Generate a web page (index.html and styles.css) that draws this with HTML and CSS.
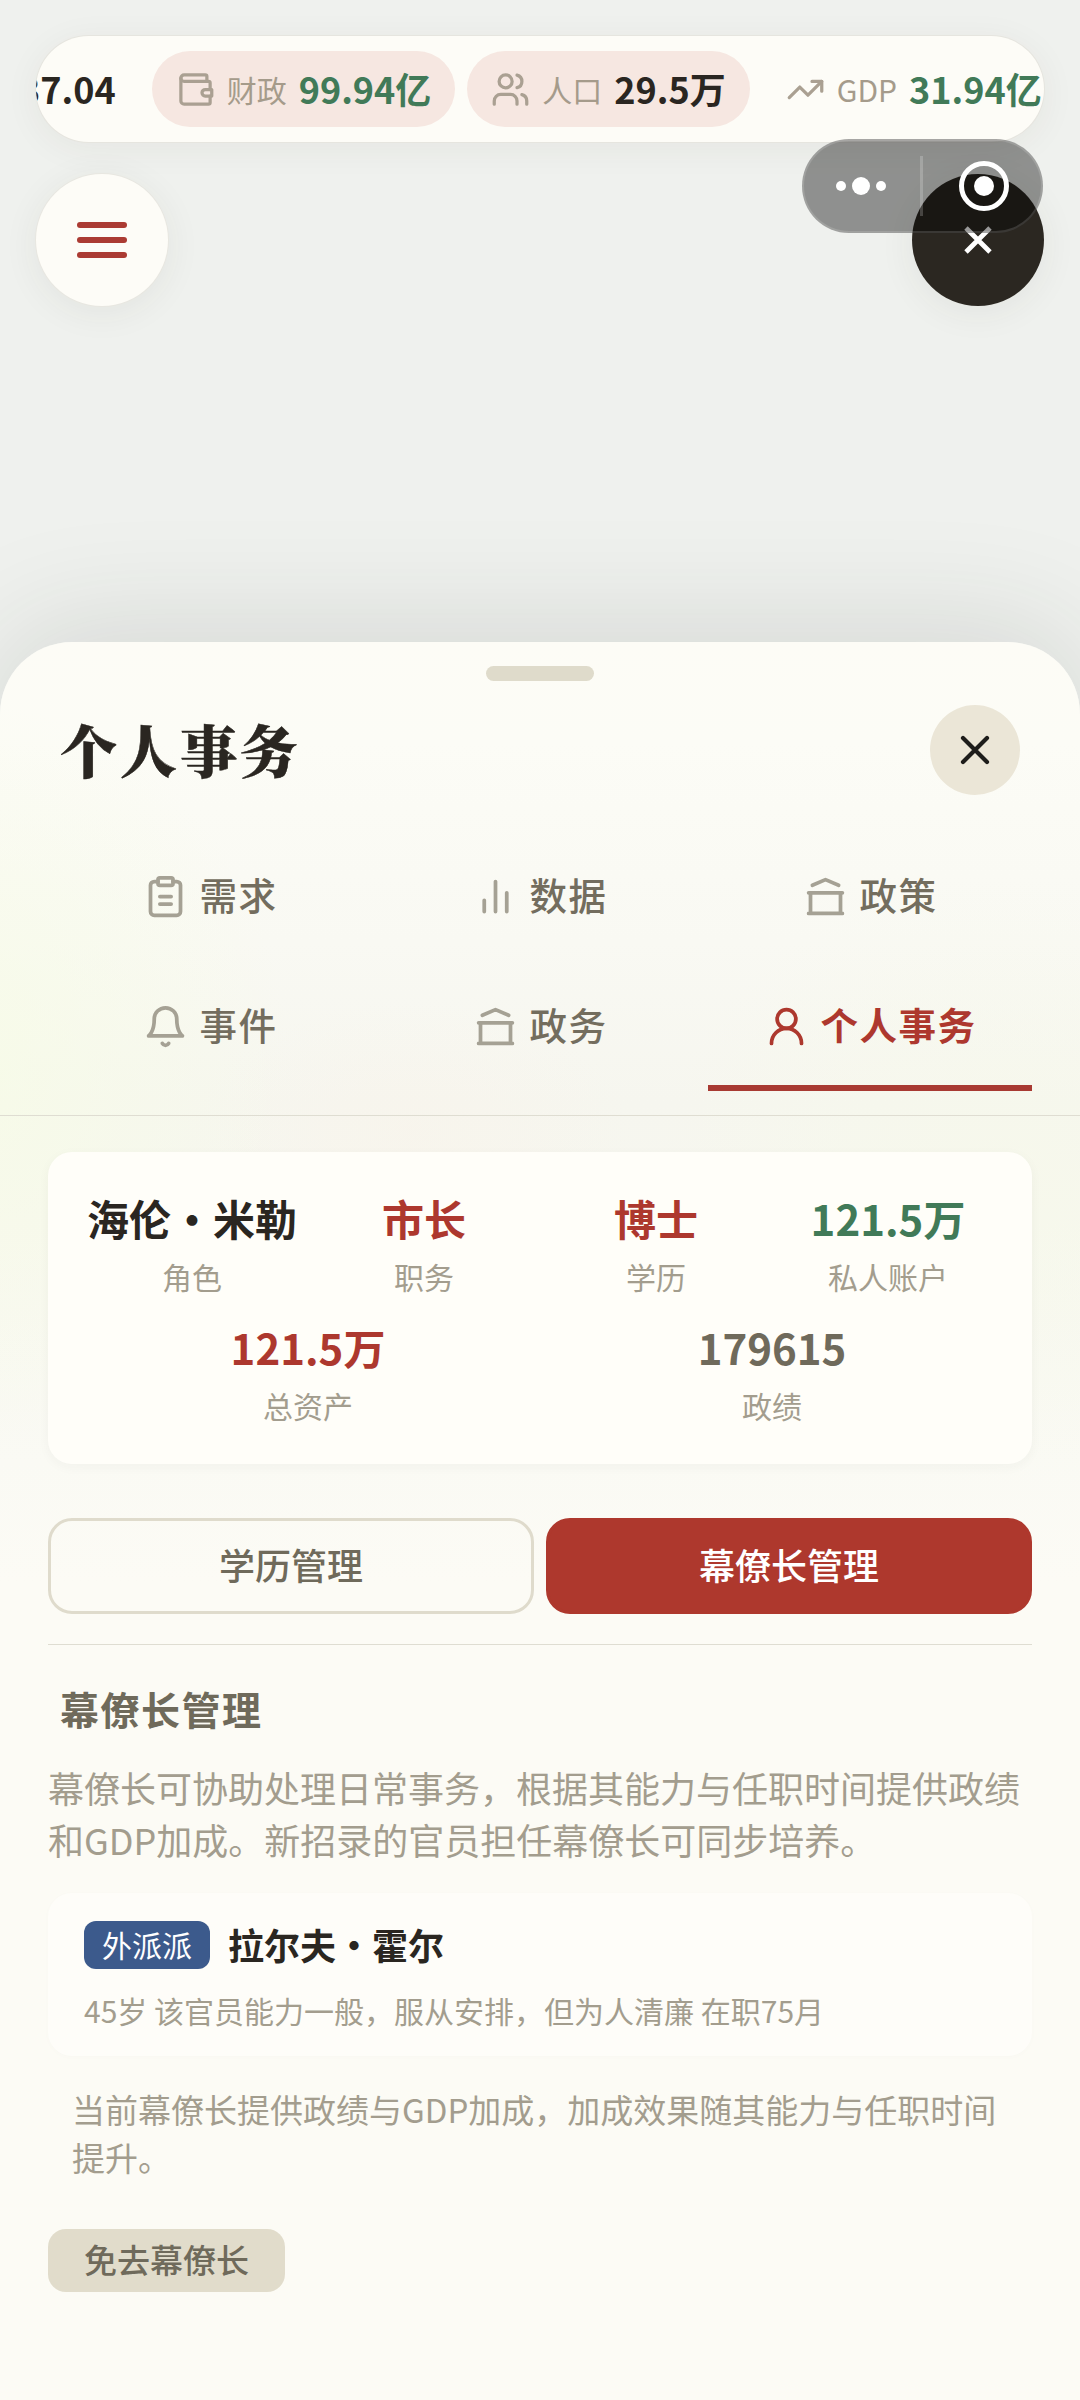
FILE: index.html
```html
<!DOCTYPE html>
<html lang="zh-CN">
<head>
<meta charset="utf-8">
<title>个人事务</title>
<link rel="stylesheet" href="styles.css">
</head>
<body>
<svg class="defs" aria-hidden="true">
  <symbol id="bank" viewBox="0 0 24 24"><path d="M3 21h18M3 10h18M5 6l7-3 7 3M4 10v11M20 10v11"/></symbol>
</svg>
<main class="screen">
  <header class="top">
    <div class="stats">
      <div class="track">
        <div class="chip"><b>37.04</b></div>
        <div class="chip tinted">
          <svg viewBox="0 0 24 24"><path d="M19 7V4a1 1 0 0 0-1-1H5a2 2 0 0 0 0 4h15a1 1 0 0 1 1 1v4"/><path d="M3 5v14a2 2 0 0 0 2 2h15a1 1 0 0 0 1-1v-4"/><path d="M18 12a2 2 0 0 0 0 4h4v-4Z"/></svg>
          <span>财政</span><b class="green">99.94亿</b>
        </div>
        <div class="chip tinted">
          <svg viewBox="0 0 24 24"><path d="M16 21v-2a4 4 0 0 0-4-4H6a4 4 0 0 0-4 4v2"/><circle cx="9" cy="7" r="4"/><path d="M22 21v-2a4 4 0 0 0-3-3.87"/><path d="M16 3.13a4 4 0 0 1 0 7.75"/></svg>
          <span>人口</span><b>29.5万</b>
        </div>
        <div class="chip">
          <svg viewBox="0 0 24 24"><path d="M22 7 13.5 15.5 8.5 10.5 2 17"/><path d="M16 7h6v6"/></svg>
          <span>GDP</span><b class="green">31.94亿</b>
        </div>
      </div>
    </div>
    <div class="actions">
      <button class="round menu"><i></i><i></i><i></i></button>
      <button class="round exit"><svg viewBox="0 0 28 28"><path d="M2 2 26 26M26 2 2 26"/></svg></button>
    </div>
    <div class="capsule">
      <div class="dots"><i></i><i class="big"></i><i></i></div>
      <div class="rule"></div>
      <div class="target"><i></i></div>
    </div>
  </header>

  <section class="sheet">
    <div class="handle"></div>
    <div class="title-row">
      <h1>个人事务</h1>
      <button class="close"><svg viewBox="0 0 30 30"><path d="M3 3 27 27M27 3 3 27"/></svg></button>
    </div>
    <nav class="tabs">
      <a class="tab"><svg viewBox="0 0 24 24"><rect x="8" y="2" width="8" height="4" rx="1"/><path d="M16 4h2a2 2 0 0 1 2 2v14a2 2 0 0 1-2 2H6a2 2 0 0 1-2-2V6a2 2 0 0 1 2-2h2"/><path d="M9 12h6M9 16h6"/></svg><span>需求</span></a>
      <a class="tab"><svg viewBox="0 0 24 24"><path d="M18 20V10M12 20V4M6 20v-6"/></svg><span>数据</span></a>
      <a class="tab"><svg><use href="#bank"/></svg><span>政策</span></a>
      <a class="tab"><svg viewBox="0 0 24 24"><path d="M6 8a6 6 0 0 1 12 0c0 7 3 9 3 9H3s3-2 3-9"/><path d="M10.3 21a1.94 1.94 0 0 0 3.4 0"/></svg><span>事件</span></a>
      <a class="tab"><svg><use href="#bank"/></svg><span>政务</span></a>
      <a class="tab active"><svg viewBox="0 0 24 24"><circle cx="12" cy="8" r="5"/><path d="M20 21a8 8 0 0 0-16 0"/></svg><span>个人事务</span></a>
    </nav>
    <div class="content">
      <div class="profile">
        <div class="cell"><b>海伦·米勒</b><span>角色</span></div>
        <div class="cell"><b class="red">市长</b><span>职务</span></div>
        <div class="cell"><b class="red">博士</b><span>学历</span></div>
        <div class="cell"><b class="green">121.5万</b><span>私人账户</span></div>
        <div class="cell wide"><b class="red">121.5万</b><span>总资产</span></div>
        <div class="cell wide"><b class="grey">179615</b><span>政绩</span></div>
      </div>
      <div class="switch">
        <button class="option">学历管理</button>
        <button class="option on">幕僚长管理</button>
      </div>
      <h2>幕僚长管理</h2>
      <p class="intro">幕僚长可协助处理日常事务，根据其能力与任职时间提供政绩和GDP加成。新招录的官员担任幕僚长可同步培养。</p>
      <article class="officer">
        <div class="officer-head"><span class="tag">外派派</span><b>拉尔夫·霍尔</b></div>
        <p>45岁 该官员能力一般，服从安排，但为人清廉 在职75月</p>
      </article>
      <p class="note">当前幕僚长提供政绩与GDP加成，加成效果随其能力与任职时间提升。</p>
      <button class="dismiss">免去幕僚长</button>
    </div>
  </section>
</main>
</body>
</html>
```
FILE: styles.css
```css
* { box-sizing: border-box; margin: 0; padding: 0; }
body {
  font-family: "Noto Sans CJK SC", sans-serif;
  color: #2a2621;
  background: #eff1ee;
}
button { border: 0; font: inherit; color: inherit; background: none; }
i { display: block; }
.defs { display: none; }
svg { fill: none; stroke: currentColor; stroke-width: 2; stroke-linecap: round; stroke-linejoin: round; }
.green { color: #417a58; }
.red { color: #ad382e; }
.grey { color: #6f6a5b; }

.screen {
  width: 1080px;
  height: 2400px;
  overflow: hidden;
  display: flex;
  flex-direction: column;
  background: #eff1ee;
}
.top { position: relative; height: 642px; padding: 36px 36px 0; flex: none; }

.stats {
  height: 106px;
  border-radius: 53px;
  background: #fdfcf7;
  overflow: hidden;
  box-shadow: 0 0 0 1px #e6e5df, 0 6px 36px rgba(60, 55, 40, .06);
}
.track { display: flex; gap: 12px; width: max-content; margin-left: -41px; padding-top: 15px; }
.chip {
  display: flex;
  align-items: center;
  gap: 12px;
  height: 76px;
  padding: 0 24px;
  border-radius: 38px;
  white-space: nowrap;
  line-height: 74px;
}
.tinted { background: #f6e7e1; }
.chip svg { width: 39px; height: 39px; color: #aaa092; }
.chip span { font-size: 30px; color: #a59b8b; }
.chip b { font-size: 36px; padding-bottom: 2px; }

.actions { display: flex; justify-content: space-between; margin-top: 32px; }
.round {
  width: 132px;
  height: 132px;
  border-radius: 50%;
  display: flex;
  flex-direction: column;
  align-items: center;
  justify-content: center;
  box-shadow: 0 6px 36px rgba(60, 55, 40, .07);
}
.menu { background: #fdfcf7; gap: 9px; box-shadow: 0 0 0 1px #e8e7e1, 0 6px 36px rgba(60, 55, 40, .07); }
.menu i { width: 50px; height: 6px; border-radius: 3px; background: #ab3b33; }
.exit { background: #2b2721; color: #fff; }
.exit svg { width: 28px; height: 28px; stroke-width: 4.8; stroke-linecap: butt; }

.capsule {
  position: absolute;
  left: 802px;
  top: 139px;
  width: 241px;
  height: 94px;
  border: 2px solid rgba(255, 255, 255, .14);
  border-radius: 47px;
  background: rgba(0, 0, 0, .4);
  display: flex;
  align-items: center;
}
.dots { width: 114px; display: flex; gap: 6px; align-items: center; justify-content: center; }
.dots i { width: 10px; height: 10px; border-radius: 50%; background: #fff; }
.dots .big { width: 18px; height: 18px; }
.rule { width: 3px; height: 60px; margin-left: 2px; background: rgba(255, 255, 255, .2); }
.target {
  width: 50px;
  height: 50px;
  margin-left: 36px;
  border: 5px solid #fff;
  border-radius: 50%;
  display: flex;
  align-items: center;
  justify-content: center;
}
.target i { width: 20px; height: 20px; border-radius: 50%; background: #fff; }

.sheet {
  flex: 1;
  border-radius: 72px 72px 0 0;
  padding-top: 24px;
  background:
    radial-gradient(330px 370px at -40px 430px, rgba(247, 252, 230, .8), rgba(247, 252, 230, 0)),
    radial-gradient(340px 300px at 1000px 540px, rgba(246, 249, 233, .6), rgba(246, 249, 233, 0)),
    radial-gradient(220px 130px at 410px 490px, rgba(249, 243, 234, .5), rgba(249, 243, 234, 0)),
    linear-gradient(#fdfcf6 0, #fcfcf6 100px, #f9f9f3 300px, #f6f6ef 460px, #f7f7ef 580px, #fafaf4 820px, #fcfbf5 940px);
  box-shadow: 0 -12px 120px rgba(40, 45, 35, .13);
}
.handle { width: 108px; height: 15px; margin: 0 auto; border-radius: 8px; background: #dfdbcb; }
.title-row {
  display: flex;
  justify-content: space-between;
  align-items: center;
  height: 90px;
  margin: 24px 60px 36px;
}
h1 {
  font-family: "Noto Serif CJK SC", "Noto Serif SC", "Noto Sans CJK SC", serif;
  font-size: 57px;
  font-weight: 900;
  letter-spacing: 3px;
  line-height: 87px;
  padding-bottom: 3px;
  -webkit-text-stroke: .5px currentColor;
}
.close {
  width: 90px;
  height: 90px;
  border-radius: 50%;
  background: #ebe6d7;
  color: #1d1c1a;
  display: flex;
  align-items: center;
  justify-content: center;
}
.close svg { width: 30px; height: 30px; stroke-width: 4.2; }

.tabs {
  display: grid;
  grid-template-columns: repeat(3, 1fr);
  grid-auto-rows: 130px;
  column-gap: 6px;
  padding: 0 48px 24px;
  border-bottom: 1px solid #dfddd2;
}
.tab {
  display: flex;
  align-items: center;
  justify-content: center;
  gap: 12px;
  font-size: 37.5px;
  letter-spacing: 1.5px;
  font-weight: 500;
  line-height: 56px;
  color: #736d5e;
}
.tab svg { width: 45px; height: 45px; color: #a5a194; }
.tab span { padding-bottom: 5px; }
.active { color: #ad382e; font-weight: 700; box-shadow: inset 0 -6px #a83a32; }
.active svg { color: inherit; }

.content { padding: 36px 48px 0; }
.profile {
  display: flex;
  flex-wrap: wrap;
  height: 312px;
  padding: 36px 28px 0;
  border-radius: 24px;
  background: #fffef9;
  box-shadow: 0 3px 12px rgba(60, 55, 40, .04);
  align-content: flex-start;
}
.cell {
  width: 25%;
  height: 129px;
  display: flex;
  flex-direction: column;
  align-items: center;
  white-space: nowrap;
}
.wide { width: 50%; }
.cell b { font-size: 42px; line-height: 60px; }
.cell span { font-size: 30px; line-height: 44px; margin-top: 6px; color: #a39d8e; }

.switch { display: flex; gap: 12px; margin-top: 54px; padding-bottom: 30px; border-bottom: 1px solid #dfddd2; }
.option {
  flex: 1;
  height: 96px;
  padding-bottom: 4px;
  border: 3px solid #dfdbcc;
  border-radius: 24px;
  font-size: 36px;
  font-weight: 500;
  line-height: 86px;
  color: #6f6a5b;
}
.on { background: #ae382d; border-color: #ae382d; color: #fff; }

h2 {
  margin: 34px 12px 0;
  font-size: 39px;
  line-height: 58px;
  letter-spacing: 1.5px;
  color: #6f6a5b;
}
.intro { margin-top: 24px; font-size: 36px; line-height: 52px; color: #a39d8e; }
.officer {
  height: 163px;
  margin-top: 28px;
  padding: 28px 36px 0;
  border-radius: 24px;
  background: #fefdf9;
  box-shadow: 0 1px 6px rgba(60, 55, 40, .015);
}
.officer-head { display: flex; align-items: center; gap: 18px; height: 48px; }
.tag {
  height: 48px;
  padding: 0 18px;
  border-radius: 12px;
  background: #3c5a8c;
  color: #fff;
  font-size: 30px;
  line-height: 47px;
}
.officer b { font-size: 36px; line-height: 46px; padding-bottom: 2px; }
.officer p { margin-top: 19px; font-size: 30px; line-height: 44px; color: #a39d8e; }
.note { margin-top: 29px; padding: 0 24px; font-size: 33px; line-height: 48px; color: #a39d8e; }
.dismiss {
  margin-top: 48px;
  height: 63px;
  padding: 0 36px 3px;
  border-radius: 18px;
  background: #e1dccb;
  font-size: 33px;
  font-weight: 500;
  line-height: 58px;
  color: #6f6a5b;
}
```
